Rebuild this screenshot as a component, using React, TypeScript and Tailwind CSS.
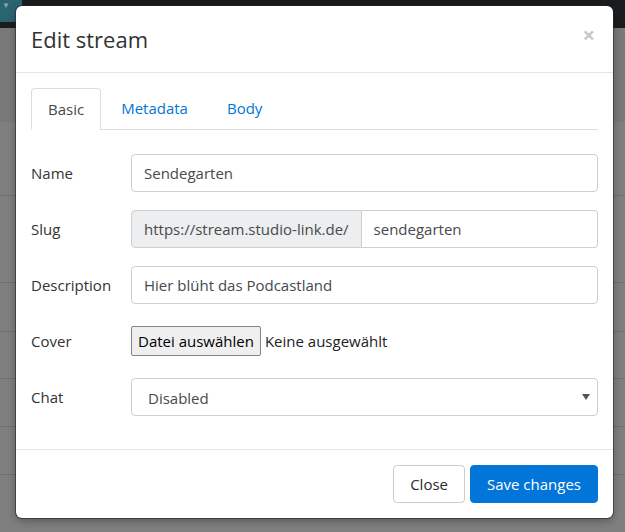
import React from "react";

const rows = [
  { label: "Name", value: "Sendegarten" },
  { label: "Description", value: "Hier blüht das Podcastland" },
];

const TextField = ({ value }: { value: string }) => (
  <div className="flex h-[38px] flex-1 items-center rounded-[4px] border border-[#cfcfcf] px-[12px] text-[#464a4c]">
    {value}
  </div>
);

const Row = ({ label, children }: { label: string; children: React.ReactNode }) => (
  <div className="mb-[18px] flex items-center">
    <span className="w-[100px] text-[#333]">{label}</span>
    {children}
  </div>
);

const App = () => {
  return (
    <div
      className="relative h-[532px] w-[625px] overflow-hidden bg-[#7f7f7f] text-[15px]"
      style={{ fontFamily: '"Open Sans", "Noto Sans", sans-serif' }}
    >
      {/* page behind the backdrop */}
      <div className="flex h-[28px] items-start bg-[#1b1c1e]">
        <div className="relative h-[22px] w-[22px] bg-[#2a6470]">
          <span className="absolute left-[2px] top-[1px] text-[8px] leading-none text-[#8aa]">▼</span>
        </div>
      </div>
      <div className="h-[94px] bg-[#797979]" />
      <div className="h-[74px] border-b border-[#6e6e6e]" />
      <div className="h-[87px] border-b border-[#6e6e6e]" />
      <div className="h-[49px] border-b border-[#6e6e6e]" />
      <div className="h-[47px] border-b border-[#6e6e6e]" />
      <div className="h-[48px] border-b border-[#6e6e6e]" />
      <div className="h-[48px] border-b border-[#6e6e6e]" />

      {/* modal */}
      <div className="absolute left-[16px] top-[6px] w-[597px] rounded-[6px] bg-white shadow-[0_0_0_1px_rgba(40,40,40,0.6),0_3px_9px_rgba(0,0,0,0.3)]">
        <div className="flex justify-between border-b border-[#e5e5e5] px-[15px] py-[15px]">
          <h4 className="text-[22px] leading-[36px] text-[#333]">Edit stream</h4>
          <span className="mr-[3px] mt-[2px] text-[22px] font-bold leading-none text-[#c8c8c8]">×</span>
        </div>

        <div className="px-[15px] pb-[15px] pt-[15px]">
          <div className="flex border-b border-[#ddd]">
            <span className="-mb-px mr-[4px] rounded-t-[4px] border border-[#ddd] border-b-white px-[16px] py-[8px] leading-[24px] text-[#464a4c]">
              Basic
            </span>
            <span className="mr-[7px] px-[16px] py-[8px] leading-[24px] text-[#0275d8]">Metadata</span>
            <span className="px-[16px] py-[8px] leading-[24px] text-[#0275d8]">Body</span>
          </div>

          <div className="pt-[24px]">
            <Row label={rows[0].label}>
              <TextField value={rows[0].value} />
            </Row>
            <Row label="Slug">
              <div className="flex h-[38px] flex-1 text-[#464a4c]">
                <div className="flex items-center rounded-l-[4px] border border-[#cfcfcf] bg-[#eceeef] px-[12px]">
                  https://stream.studio-link.de/
                </div>
                <div className="flex flex-1 items-center rounded-r-[4px] border border-l-0 border-[#cfcfcf] px-[12px]">
                  sendegarten
                </div>
              </div>
            </Row>
            <Row label={rows[1].label}>
              <TextField value={rows[1].value} />
            </Row>
            <Row label="Cover">
              <div className="flex h-[38px] flex-1 items-center">
                <span className="rounded-[2px] border border-[#858585] bg-[#efefef] px-[6px] py-[2px] leading-[24px] text-black">
                  Datei auswählen
                </span>
                <span className="ml-[4px] text-[#222]">Keine ausgewählt</span>
              </div>
            </Row>
            <Row label="Chat">
              <div className="flex h-[38px] flex-1 items-center justify-between rounded-[4px] border border-[#cfcfcf] pl-[16px] pr-[7px] text-[#464a4c]">
                <span className="pt-[2px]">Disabled</span>
                <svg width="8" height="6" viewBox="0 0 8 6">
                  <path d="M0 0h8L4 6z" fill="#555" />
                </svg>
              </div>
            </Row>
          </div>
        </div>

        <div className="flex justify-end gap-[5px] border-t border-[#e5e5e5] px-[15px] py-[15px]">
          <button className="h-[38px] rounded-[4px] border border-[#ccc] bg-white px-[16px] text-[#292b2c]">
            Close
          </button>
          <button className="h-[38px] rounded-[4px] border border-[#0275d8] bg-[#0275d8] px-[16px] text-white">
            Save changes
          </button>
        </div>
      </div>
    </div>
  );
};

export default App;
